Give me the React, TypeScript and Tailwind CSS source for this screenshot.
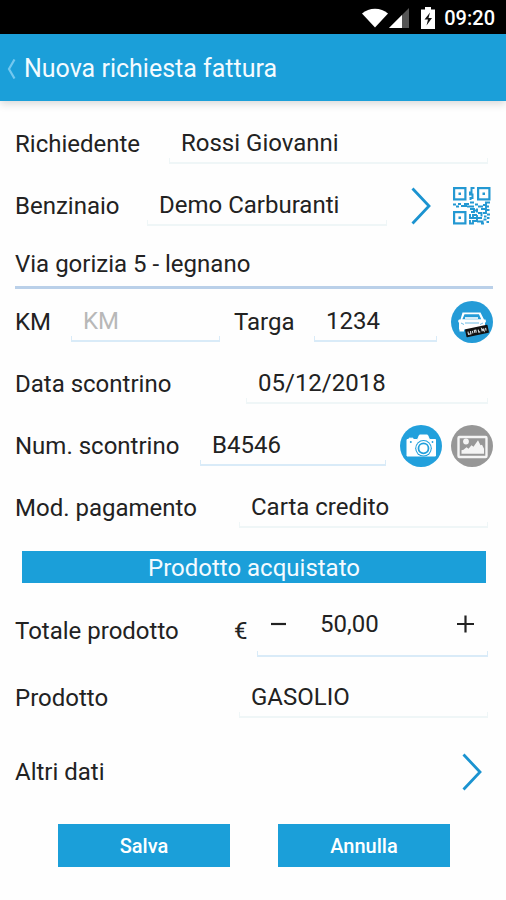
import { useState, type ReactNode } from "react";

const inputClass =
  "block h-full w-full appearance-none bg-transparent text-2xl text-[#222222] placeholder-[#b8b8b8] outline-none";

function Field({ children, className = "", line = "soft" }: { children: ReactNode; className?: string; line?: "soft" | "blue" }) {
  const tone =
    line === "blue"
      ? "border-[#d9ebf8] before:bg-[#d9ebf8] after:bg-[#d9ebf8]"
      : "border-[#eff6f7] before:bg-[#eff6f7] after:bg-[#eff6f7]";
  return (
    <div
      className={`relative h-10 min-w-0 border-b-2 before:absolute before:bottom-0 before:left-0 before:h-1 before:w-px after:absolute after:right-0 after:bottom-0 after:h-1 after:w-px ${tone} ${className}`}
    >
      {children}
    </div>
  );
}

function Chevron() {
  return (
    <svg viewBox="0 0 20 38" className="h-[38px] w-5" fill="none" stroke="#1b93d0" strokeWidth="2.8" aria-hidden="true">
      <path d="M1.5 1.5 18 19 1.5 36.5" />
    </svg>
  );
}

function QrIcon() {
  return (
    <svg viewBox="0 0 38 38" className="size-[38px]" fill="none" stroke="#2398d2" strokeWidth="2.200" aria-hidden="true">
      <rect x="1.100" y="1.100" width="11.300" height="11.300" />
      <rect x="25.100" y="1.100" width="11.300" height="11.300" />
      <rect x="1.100" y="25.100" width="11.300" height="11.300" />
      <path d="M5.500 6.750h2.500M29.500 6.750h2.500M5.500 30.750h2.500" strokeWidth="2.500" />
      <path d="M21.500 1h-3v4.500h-1.500v2h3.500M19.500 7.500v3.500h-2v2" strokeWidth="2" />
      <path
        d="M0 17.500h3M3 19.500h3M5 17h3M8 19h6M11 17h5M14 19.500h7M17 15.500h4M22 17.500h3M25 19.500h5M30 18h3v-2.500h4M28 22h5v-2.500h3"
        strokeWidth="1.900"
      />
      <path
        d="M17 22h4v3h-3M21 23.500h4M24 21.500v4M25 26h3.500v3.500M17 27v4h3v-3h4M24 28v3h5M20 31h4v3h-4v2.500h-3v-3.500M24 34.500h6.500M28 36.500h3M30 26h3v-3h3.500M31 29.500h2.500M34 27.500h3M30.500 32.500h3M34 31h2.500M33.500 35h2.500"
        strokeWidth="1.900"
      />
    </svg>
  );
}

function CarIcon() {
  return (
    <svg viewBox="0 0 42 42" className="size-[42px]" aria-hidden="true">
      <circle cx="21" cy="21" r="21" fill="#249bd7" />
      <path d="M11.500 11.500h18l3.500 7h1.500l.5 2-1 1.500v6.500H8V22l-1-2 1-1.500h1.500z" fill="#fff" />
      <path d="M13.500 13.200h14.500l2.200 5H11.300z" fill="#249bd7" />
      <path d="M14 17h13" stroke="#fff" strokeWidth="1.600" />
      <path d="M14 22h14M10 22l3 1.500M32 22l-3 1.500" stroke="#6fbde5" strokeWidth="1" />
      <path d="M8.500 28h4.500v2.500H8.500z" fill="#fff" />
      <g transform="rotate(-12 26 30)">
        <rect x="14.500" y="26" width="23" height="8" rx="0.600" fill="#111" />
        <path
          d="M17 28.800v2.700h2.500v-2.700M21.500 28.800v2.700M23.500 31.500v-2.700h1.500v2.700M27.500 28.800v2.700h1.500M31 31.500v-2.700l2 2.700v-2.700M35 28.800v2.700"
          fill="none"
          stroke="#d8dde0"
          strokeWidth="1.100"
        />
      </g>
    </svg>
  );
}

function CameraIcon() {
  return (
    <svg viewBox="0 0 42 42" className="size-[42px]" aria-hidden="true">
      <circle cx="21" cy="21" r="21" fill="#22a0dc" />
      <path
        d="M7 14.500h2v-1.300h4v1.300h4.500l2-4.500h8l2 4.500H35.500V31H7z"
        fill="#fff"
        stroke="#fff"
        strokeLinejoin="round"
      />
      <circle cx="10.800" cy="17" r="1" fill="#22a0dc" />
      <circle cx="32.500" cy="17" r="0.900" fill="#22a0dc" />
      <circle cx="23.500" cy="23.300" r="8.300" fill="#22a0dc" />
      <circle cx="23.500" cy="23.300" r="7.200" fill="#fff" />
      <circle cx="23.500" cy="23.300" r="5" fill="none" stroke="#22a0dc" strokeWidth="1.800" />
    </svg>
  );
}

function PictureIcon() {
  return (
    <svg viewBox="0 0 42 42" className="size-[42px]" aria-hidden="true">
      <circle cx="21" cy="21" r="21" fill="#979797" />
      <rect x="7.500" y="12" width="28" height="20" rx="1" fill="none" stroke="#f4f4f4" strokeWidth="2.400" />
      <circle cx="15" cy="16.500" r="2.900" fill="#f4f4f4" />
      <path d="M10.500 28.800v-3.500l2-.5 3-2.500 2 1.500 3-3.500 2 1.500 4.500-6.500 2.500 5 1.500-.5 2 4v5z" fill="#f4f4f4" />
    </svg>
  );
}

const rowClass = "flex h-[62px] items-center";
const actionClass = "h-[43px] flex-1 bg-[#1b9fd9] text-xl font-medium text-white";

export default function App() {
  const [amount, setAmount] = useState(50);
  return (
    <div className="min-h-screen bg-[#fefefe] font-['Roboto','Liberation_Sans',sans-serif] text-2xl text-[#222222]">
      <div className="flex h-[34px] items-center justify-end bg-black pt-0.5 pr-[11px] text-white">
        <svg viewBox="0 0 26 20" className="h-5 w-[26px]" fill="#fff" aria-hidden="true">
          <path d="M0 5.500C7-1 19-1 26 5.500L13 19.500z" />
        </svg>
        <svg viewBox="0 0 20 20" className="ml-px h-5 w-5" aria-hidden="true">
          <path d="M0 20 20 0V20z" fill="#555" />
          <path d="M0 20 13 7V20z" fill="#fff" />
        </svg>
        <svg viewBox="0 0 14 22" className="ml-3 h-[22px] w-3.5" aria-hidden="true">
          <path d="M4 0h6v2.500h4V22H0V2.500h4z" fill="#fff" />
          <path d="M9 5.500 3.500 12.500H7L5.500 18.500 11 11H7.500z" fill="#111" />
        </svg>
        <span className="ml-[9px] text-xl font-medium">09:20</span>
      </div>

      <header className="flex h-[67px] items-center bg-[#1b9fd9] pt-[3px] pl-[7px] text-[#f4fbff] shadow-[0_3px_8px_rgba(0,0,0,0.15)]">
        <button type="button" aria-label="Indietro" className="flex h-full w-[17px] items-center">
          <svg viewBox="0 0 10 20" className="h-5 w-2.5" fill="none" stroke="#74c8ef" strokeWidth="2.200" aria-hidden="true">
            <path d="M7.500 0.500 2 10l5.500 9.500" />
          </svg>
        </button>
        <h1 className="text-[25px]">Nuova richiesta fattura</h1>
      </header>

      <form className="pt-3 pr-[13px] pb-8 pl-[15px]" onSubmit={(e) => e.preventDefault()}>
        <div className={rowClass}>
          <label htmlFor="richiedente" className="w-[154px]">Richiedente</label>
          <Field className="mr-[5px] flex-1">
            <input id="richiedente" defaultValue="Rossi Giovanni" className={`${inputClass} px-3`} />
          </Field>
        </div>
        <div className={rowClass}>
          <label htmlFor="benzinaio" className="w-[132px]">Benzinaio</label>
          <Field className="flex-1">
            <input id="benzinaio" defaultValue="Demo Carburanti" className={`${inputClass} px-3`} />
          </Field>
          <button type="button" aria-label="Scegli benzinaio" className="ml-6">
            <Chevron />
          </button>
          <button type="button" aria-label="Scansiona codice QR" className="mr-0.5 ml-[22px]">
            <QrIcon />
          </button>
        </div>
        <p className="mb-0.5 flex h-[52px] items-center border-b-[3px] border-[#bad0e9] pt-1">Via gorizia 5 - legnano</p>
        <div className={rowClass}>
          <label htmlFor="km" className="w-14">KM</label>
          <Field line="blue" className="flex-[149]">
            <input id="km" placeholder="KM" className={`${inputClass} px-3`} />
          </Field>
          <label htmlFor="targa" className="ml-[14px] w-20">Targa</label>
          <Field line="blue" className="flex-[123]">
            <input id="targa" defaultValue="1234" className={`${inputClass} px-3`} />
          </Field>
          <button type="button" aria-label="Scegli veicolo" className="ml-[14px]">
            <CarIcon />
          </button>
        </div>
        <div className={rowClass}>
          <label htmlFor="data" className="w-[231px]">Data scontrino</label>
          <Field className="mr-[5px] flex-1">
            <input id="data" defaultValue="05/12/2018" className={`${inputClass} px-3`} />
          </Field>
        </div>
        <div className={rowClass}>
          <label htmlFor="numero" className="w-[185px]">Num. scontrino</label>
          <Field line="blue" className="flex-1">
            <input id="numero" defaultValue="B4546" className={`${inputClass} px-3`} />
          </Field>
          <button type="button" aria-label="Scatta foto" className="ml-[14px]">
            <CameraIcon />
          </button>
          <button type="button" aria-label="Apri immagine" className="ml-[9px]">
            <PictureIcon />
          </button>
        </div>
        <div className={rowClass}>
          <label htmlFor="pagamento" className="w-56">Mod. pagamento</label>
          <Field className="mr-[5px] flex-1">
            <select id="pagamento" className={`${inputClass} px-3`}>
              <option>Carta credito</option>
            </select>
          </Field>
        </div>

        <h2 className="mx-[7px] mt-3 h-8 bg-[#1b9fd9] text-center leading-[34px] text-[#f4fbff]">Prodotto acquistato</h2>

        <div className="mt-[10px] flex h-16 items-start">
          <label htmlFor="totale" className="w-[219px] pt-[22px]">Totale prodotto</label>
          <span className="w-[23px] pt-[22px]">€</span>
          <Field line="blue" className="mr-[5px] h-16 flex-1">
            <div className="flex h-full items-center">
              <button type="button" aria-label="Diminuisci" className="ml-3 h-10 w-5" onClick={() => setAmount(amount - 1)}>
                <svg viewBox="0 0 20 20" className="size-5" stroke="#222" strokeWidth="2.200" aria-hidden="true">
                  <path d="M2 10h15" />
                </svg>
              </button>
              <input
                id="totale"
                value={amount.toFixed(2).replace(".", ",")}
                onChange={(e) => setAmount(parseFloat(e.target.value.replace(",", ".")) || 0)}
                className={`${inputClass} min-w-0 flex-1 pl-[31px]`}
              />
              <button type="button" aria-label="Aumenta" className="mr-3 h-10 w-5" onClick={() => setAmount(amount + 1)}>
                <svg viewBox="0 0 20 20" className="size-5" stroke="#222" strokeWidth="2.200" aria-hidden="true">
                  <path d="M1 10h17M9.500 1.500v17" />
                </svg>
              </button>
            </div>
          </Field>
        </div>
        <div className={`${rowClass} mt-[10px]`}>
          <label htmlFor="prodotto" className="w-56">Prodotto</label>
          <Field className="mr-[5px] flex-1">
            <select id="prodotto" className={`${inputClass} px-3`}>
              <option>GASOLIO</option>
            </select>
          </Field>
        </div>
        <div className={`${rowClass} mt-3 justify-between pr-[11px]`}>
          <span id="altri">Altri dati</span>
          <button type="button" aria-labelledby="altri">
            <Chevron />
          </button>
        </div>

        <div className="mt-[21px] flex gap-12 px-[43px]">
          <button type="submit" className={actionClass}>Salva</button>
          <button type="button" className={actionClass}>Annulla</button>
        </div>
      </form>
    </div>
  );
}
